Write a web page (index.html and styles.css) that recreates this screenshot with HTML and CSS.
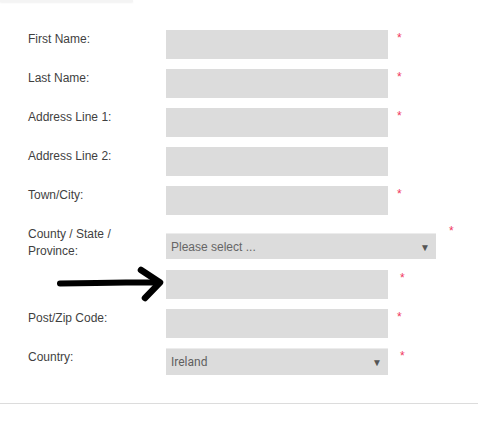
FILE: index.html
```html
<!DOCTYPE html>
<html>
<head>
<meta charset="utf-8">
<link rel="stylesheet" href="styles.css">
</head>
<body>
<div class="topbar"></div>
<form class="form">
  <div class="row">
    <label class="label">First Name:</label>
    <div class="input"></div>
    <span class="req">*</span>
  </div>
  <div class="row">
    <label class="label">Last Name:</label>
    <div class="input"></div>
    <span class="req">*</span>
  </div>
  <div class="row">
    <label class="label">Address Line 1:</label>
    <div class="input"></div>
    <span class="req">*</span>
  </div>
  <div class="row">
    <label class="label">Address Line 2:</label>
    <div class="input"></div>
  </div>
  <div class="row">
    <label class="label">Town/City:</label>
    <div class="input"></div>
    <span class="req">*</span>
  </div>
  <div class="row">
    <label class="label">County / State /<br>Province:</label>
    <div class="select select-wide">
      <span class="select-text">Please select ...</span>
      <span class="caret">&#9660;</span>
    </div>
    <span class="req req-wide">*</span>
  </div>
  <div class="row row-arrow">
    <label class="label"></label>
    <div class="input"></div>
    <span class="req req-far">*</span>
    <svg class="arrow" width="120" height="40" viewBox="0 0 120 40">
      <path d="M4 16.5 L40 16 L70 15.5 L102 15.5" fill="none" stroke="#000" stroke-width="6" stroke-linecap="round" stroke-linejoin="round"/>
      <path d="M85 3 L104 15.5 L89 31" fill="none" stroke="#000" stroke-width="6.5" stroke-linecap="round" stroke-linejoin="round"/>
    </svg>
  </div>
  <div class="row">
    <label class="label">Post/Zip Code:</label>
    <div class="input"></div>
    <span class="req">*</span>
  </div>
  <div class="row">
    <label class="label">Country:</label>
    <div class="select select-country">
      <span class="select-text select-text-roboto">Ireland</span>
      <span class="caret">&#9660;</span>
    </div>
    <span class="req req-far">*</span>
  </div>
</form>
<hr class="rule">
</body>
</html>
```

FILE: styles.css
```css
html, body {
  margin: 0;
  padding: 0;
  background: #fff;
}

body {
  font-family: "Liberation Sans", Arial, sans-serif;
  font-size: 12px;
  color: #3f3f3f;
  width: 478px;
  height: 428px;
  overflow: hidden;
}

.topbar {
  width: 133px;
  height: 2px;
  background: #f4f4f4;
  box-shadow: 0 1px 2px rgba(0, 0, 0, 0.06);
}

.form {
  display: flex;
  flex-direction: column;
  gap: 10px;
  padding: 28px 0 0 28px;
  margin: 0;
}

.row {
  display: flex;
  align-items: flex-start;
  position: relative;
}

.label {
  width: 138px;
  flex: none;
  line-height: 17px;
  padding-top: 1px;
  color: #3f3f3f;
}

.input {
  width: 222px;
  height: 29px;
  background: #dcdcdc;
  flex: none;
}

.req {
  color: #f0365e;
  font-size: 12px;
  line-height: 12px;
  margin-left: 9px;
  margin-top: 2px;
}

.req-far {
  margin-left: 12px;
}

.req-wide {
  margin-left: 13px;
  margin-top: 0;
}

.select {
  flex: none;
  display: flex;
  align-items: center;
  justify-content: space-between;
  background: #dcdcdc;
  border-top: 1px solid #ececec;
  box-sizing: border-box;
  padding: 0 6px 0 5px;
  color: #666;
}

.select-wide {
  width: 270px;
  height: 26px;
  margin-top: 8px;
}

.select-country {
  width: 222px;
  height: 27px;
}

.select-text {
  font-size: 12px;
  color: #666;
}

.select-text-roboto {
  font-family: Roboto, "Liberation Sans", sans-serif;
  color: #5f5f5f;
}

.caret {
  font-size: 10px;
  color: #555;
  margin-top: 1px;
}

.arrow {
  position: absolute;
  left: 28px;
  top: -3px;
  overflow: visible;
}

.rule {
  border: 0;
  border-top: 1px solid #dcdcdc;
  margin: 28px 0 0 0;
  height: 0;
}
```
